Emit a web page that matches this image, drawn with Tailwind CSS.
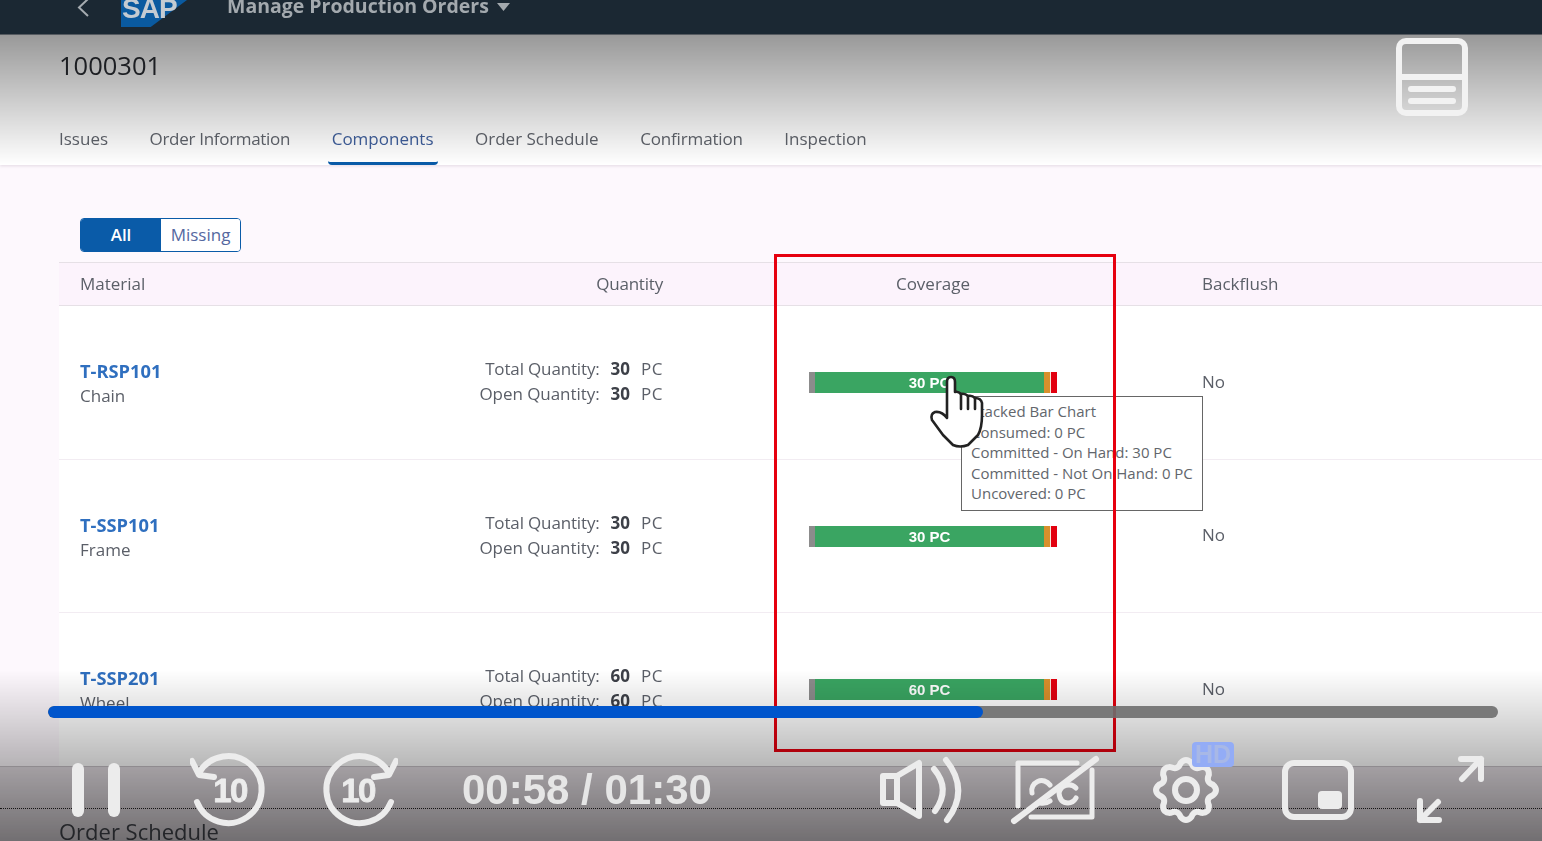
<!DOCTYPE html>
<html lang="en">
<head>
<meta charset="utf-8">
<title>Manage Production Orders</title>
<script src="https://cdn.jsdelivr.net/npm/@tailwindcss/browser@4"></script>
</head>
<body class="m-0">
<div class="relative w-[1542px] h-[841px] overflow-hidden bg-[#fdf8fd] font-['Open_Sans',sans-serif] text-[#5b5f68]">
<div class="blur-[0.5px]">

  <!-- Shell bar -->
  <header class="flex h-[35px] overflow-hidden bg-[#1b2833] border-b border-[#555b60] relative">
    <svg class="absolute left-[74px] top-0" width="18" height="18" viewBox="0 0 18 18" fill="none" stroke="#a5abb0" stroke-width="2"><path d="M14 -1 L5 7.5 L14 16"/></svg>
    <div class="absolute left-[121px] top-0 w-[66px] h-[27px] bg-[#0a5aa0] [clip-path:polygon(0_0,100%_0,45%_100%,0_100%)]"></div>
    <span class="absolute left-[122px] top-[-11px] text-[28px] leading-[40px] font-bold tracking-[-1px] text-[#c4cbd2] font-['Liberation_Sans',sans-serif]">SAP</span>
    <span class="absolute left-[227px] top-[-7px] text-[19.5px] leading-[26px] font-bold text-[#a3a9ae]">Manage Production Orders</span>
    <div class="absolute left-[497px] top-[3px] w-[13px] h-[8px] bg-[#a3a9ae] [clip-path:polygon(0_0,100%_0,50%_100%)]"></div>
  </header>

  <!-- Object header with tabs -->
  <section class="relative h-[130px] bg-white px-[59px] shadow-[0_1px_3px_rgba(120,100,120,0.2)] flex flex-col">
    <h1 class="mt-[13px] text-[25.5px] leading-[34px] font-normal text-[#2a2d33]">1000301</h1>
    <nav class="mt-auto flex gap-[33.5px] -ml-1 text-[17px] text-[#60646c]">
      <span class="px-1 h-[44px] leading-[36px]">Issues</span>
      <span class="px-1 h-[44px] leading-[36px] tracking-[-0.3px]">Order Information</span>
      <span class="px-1 h-[44px] leading-[36px] text-[#3f5f9c] border-b-[3px] border-[#0a5ba8] rounded-b-sm">Components</span>
      <span class="px-1 h-[44px] leading-[36px]">Order Schedule</span>
      <span class="px-1 h-[44px] leading-[36px] tracking-[-0.15px]">Confirmation</span>
      <span class="px-1 h-[44px] leading-[36px]">Inspection</span>
    </nav>
  </section>

  <!-- Filter -->
  <div class="pt-[53px] pb-[10px] pl-[80px]">
    <div class="flex w-[161px] h-[34px] rounded border border-[#0a5ba8] text-[17px] leading-[32px] overflow-hidden">
      <span class="w-[80px] bg-[#0a5ba8] text-white text-center font-semibold">All</span>
      <span class="flex-1 bg-white text-center text-[#55689f]">Missing</span>
    </div>
  </div>

  <!-- Table -->
  <div class="ml-[59px] h-[504px]">
    <div class="flex items-center h-[44px] pl-[21px] bg-[#fcf3fc] border-y border-[#e6e0e6] text-[17px]">
      <div class="w-[583px] flex"><span>Material</span><span class="ml-auto tracking-[-0.2px]">Quantity</span></div>
      <div class="ml-[146px] w-[248px] text-center">Coverage</div>
      <div class="ml-[145px]">Backflush</div>
    </div>

    <div class="flex items-center h-[154px] pl-[21px] bg-white border-b border-[#f2ecf2] text-[17px]">
      <div class="w-[583px] flex items-center">
        <div class="leading-[25px] pt-[1px]"><div class="font-bold text-[18.3px] text-[#2f6fbf]">T-RSP101</div><div>Chain</div></div>
        <div class="ml-auto -mt-[3px] grid grid-cols-[auto_auto_auto] gap-x-[11px] leading-[25px] text-right"><span class="tracking-[-0.15px]">Total Quantity:</span><b class="font-bold text-[#3d4048]">30</b><span class="tracking-[0.5px]">PC</span><span class="tracking-[-0.05px]">Open Quantity:</span><b class="font-bold text-[#3d4048]">30</b><span class="tracking-[0.5px]">PC</span></div>
      </div>
      <div class="ml-[146px] w-[248px] h-[21px] flex text-white font-['Liberation_Sans',sans-serif] font-bold text-[15px] leading-[21px]">
        <div class="w-[6px] bg-[#8c8c8c]"></div><div class="w-[229px] bg-[#3aa562] text-center">30 PC</div><div class="w-[6px] bg-[#d9902c]"></div><div class="w-px bg-[#f5e6d8]"></div><div class="w-[6px] bg-[#e2000f]"></div>
      </div>
      <div class="ml-[145px] -translate-y-px">No</div>
    </div>

    <div class="flex items-center h-[153px] pl-[21px] bg-white border-b border-[#f2ecf2] text-[17px]">
      <div class="w-[583px] flex items-center">
        <div class="leading-[25px] pt-[1px]"><div class="font-bold text-[18.3px] text-[#2f6fbf]">T-SSP101</div><div>Frame</div></div>
        <div class="ml-auto -mt-[3px] grid grid-cols-[auto_auto_auto] gap-x-[11px] leading-[25px] text-right"><span class="tracking-[-0.15px]">Total Quantity:</span><b class="font-bold text-[#3d4048]">30</b><span class="tracking-[0.5px]">PC</span><span class="tracking-[-0.05px]">Open Quantity:</span><b class="font-bold text-[#3d4048]">30</b><span class="tracking-[0.5px]">PC</span></div>
      </div>
      <div class="ml-[146px] w-[248px] h-[21px] flex text-white font-['Liberation_Sans',sans-serif] font-bold text-[15px] leading-[21px]">
        <div class="w-[6px] bg-[#8c8c8c]"></div><div class="w-[229px] bg-[#3aa562] text-center">30 PC</div><div class="w-[6px] bg-[#d9902c]"></div><div class="w-px bg-[#f5e6d8]"></div><div class="w-[6px] bg-[#e2000f]"></div>
      </div>
      <div class="ml-[145px] -translate-y-px">No</div>
    </div>

    <div class="flex items-center h-[153px] pl-[21px] bg-white text-[17px]">
      <div class="w-[583px] flex items-center">
        <div class="leading-[25px] pt-[1px]"><div class="font-bold text-[18.3px] text-[#2f6fbf]">T-SSP201</div><div>Wheel</div></div>
        <div class="ml-auto -mt-[3px] grid grid-cols-[auto_auto_auto] gap-x-[11px] leading-[25px] text-right"><span class="tracking-[-0.15px]">Total Quantity:</span><b class="font-bold text-[#3d4048]">60</b><span class="tracking-[0.5px]">PC</span><span class="tracking-[-0.05px]">Open Quantity:</span><b class="font-bold text-[#3d4048]">60</b><span class="tracking-[0.5px]">PC</span></div>
      </div>
      <div class="ml-[146px] w-[248px] h-[21px] flex text-white font-['Liberation_Sans',sans-serif] font-bold text-[15px] leading-[21px]">
        <div class="w-[6px] bg-[#8c8c8c]"></div><div class="w-[229px] bg-[#3aa562] text-center">60 PC</div><div class="w-[6px] bg-[#d9902c]"></div><div class="w-px bg-[#f5e6d8]"></div><div class="w-[6px] bg-[#e2000f]"></div>
      </div>
      <div class="ml-[145px] -translate-y-px">No</div>
    </div>
  </div>

  <!-- Next section -->
  <section class="h-[75px] bg-[#e4dee3] border-t border-[#c8c2c8]">
    <div class="h-[42px] border-b border-dotted border-[#222]"></div>
    <h2 class="ml-[59px] mt-[5px] text-[22px] leading-[34px] font-normal text-[#45484f]">Order Schedule</h2>
  </section>

  <!-- Chart tooltip -->
  <div class="absolute left-[961px] top-[396px] w-[242px] h-[115px] bg-white border border-[#666] pl-[9px] pt-[4px] text-[15px] leading-[20.6px] text-[#62666c] whitespace-nowrap">
    <div>Stacked Bar Chart</div>
    <div>Consumed: 0 PC</div>
    <div>Committed - On Hand: 30 PC</div>
    <div>Committed - Not On Hand: 0 PC</div>
    <div>Uncovered: 0 PC</div>
  </div>

  <!-- Video annotation -->
  <div class="absolute left-[774px] top-[254px] w-[342px] h-[498px] border-[3px] border-[#e6000f]"></div>

  <!-- Hand cursor -->
  <svg class="absolute left-[925px] top-[372px]" width="64" height="80" viewBox="925 372 64 80" fill="#fff" stroke="#222" stroke-width="2.6" stroke-linejoin="round" stroke-linecap="round">
    <path d="M947 382 Q947 377 951 377 Q955 377 955 382 L955 392 Q958 391 961 394 Q965 393 968 396 Q972 395 975 398 Q981 398 982 403 L982 415 Q982 428 978 435 L968 445 Q960 448 953 445 L943 435 L932 420 Q930 414 935 412 Q942 411 947 418 Z"/>
    <path d="M961 394 V409 M968 396 V409 M975 398 V409" fill="none"/>
  </svg>
</div>

  <!-- Player scrims -->
  <div class="absolute inset-x-0 top-[35px] h-[130px] bg-gradient-to-b from-black/40 to-transparent"></div>
  <div class="absolute inset-x-0 top-[670px] bottom-0 bg-gradient-to-b from-transparent to-black/50"></div>

  <!-- Layout toggle -->
  <svg class="absolute left-[1396px] top-[38px]" width="72" height="78" viewBox="0 0 72 78" fill="none" stroke="#f2f2f2" stroke-width="6" stroke-linecap="round">
    <rect x="3" y="3" width="66" height="72" rx="7"/>
    <path d="M3 39 H69" stroke-linecap="butt"/>
    <path d="M15 51 H57 M15 63 H57"/>
  </svg>

  <!-- Progress -->
  <div class="absolute left-[48px] top-[706px] w-[1450px] h-3 rounded-full bg-[#6e6e6e]/90 overflow-hidden">
    <div class="w-[935px] h-full rounded-full bg-[#0055cc]"></div>
  </div>

  <!-- Player controls -->
  <div class="absolute left-0 top-[750px] w-full h-20 flex items-center pl-[72px] text-[#ececec]">
    <div class="flex gap-6 w-12 h-[54px]"><div class="w-3 h-full rounded-full bg-[#ececec]"></div><div class="w-3 h-full rounded-full bg-[#ececec]"></div></div>

    <svg class="ml-[70px] shrink-0" width="76" height="80" viewBox="190 750 76 80" fill="none" stroke="#ececec" stroke-width="6" stroke-linecap="round" stroke-linejoin="round">
      <path d="M199 773 A33.5 33.5 0 1 1 197 802"/>
      <path d="M192 761 L199 775 L214 777"/>
      <text x="230" y="802" text-anchor="middle" fill="#ececec" stroke="#ececec" stroke-width="0.8" font-family="Liberation Sans" font-weight="700" font-size="33" letter-spacing="-1.5">10</text>
    </svg>

    <svg class="ml-[56px] shrink-0" width="76" height="80" viewBox="322 750 76 80" fill="none" stroke="#ececec" stroke-width="6" stroke-linecap="round" stroke-linejoin="round">
      <path d="M389 773 A33.5 33.5 0 1 0 391 802"/>
      <path d="M396 761 L389 775 L374 777"/>
      <text x="358" y="802" text-anchor="middle" fill="#ececec" stroke="#ececec" stroke-width="0.8" font-family="Liberation Sans" font-weight="700" font-size="33" letter-spacing="-1.5">10</text>
    </svg>

    <div class="ml-[64px] w-[249px] shrink-0 whitespace-nowrap font-['Liberation_Sans',sans-serif] font-bold text-[42px] leading-[80px] text-[#e6e6e6]">00:58 / 01:30</div>

    <svg class="ml-[167px] shrink-0" width="86" height="80" viewBox="878 750 86 80" fill="none" stroke="#ececec" stroke-width="6" stroke-linecap="round" stroke-linejoin="round">
      <path d="M883 776 H897 L919 763 V816 L897 803 H883 Z M897 776 V803"/>
      <path d="M934 769 Q951 789 935 811"/>
      <path d="M946 760 Q970 790 947 820"/>
    </svg>

    <svg class="ml-[46px] shrink-0" width="90" height="80" viewBox="1010 750 90 80" fill="none" stroke="#ececec" stroke-width="5" stroke-linecap="round" stroke-linejoin="round">
      <path d="M1018 806 V763 H1077"/>
      <path d="M1092 770 V817 H1031"/>
      <path d="M1014 821 L1096 759" stroke-width="6"/>
      <path d="M1050 785 A10 10 0 0 0 1032 793"/>
      <path d="M1040 803 Q1046 804 1050 801"/>
      <path d="M1076 788 A10 10 0 0 0 1059 793 Q1060 803 1068 803 Q1073 803 1076 798"/>
    </svg>

    <div class="relative ml-[50px] w-[72px] h-20 shrink-0">
      <svg class="absolute inset-0" width="72" height="80" viewBox="-36 -40 72 80" fill="none" stroke="#ececec" stroke-width="6" stroke-linejoin="round">
        <path d="M26.97 -5.36 Q33 0 26.97 5.36 Q19.4 8.04 22.87 15.28 Q23.33 23.33 15.28 22.87 Q8.04 19.4 5.36 26.97 Q0 33 -5.36 26.97 Q-8.04 19.4 -15.28 22.87 Q-23.33 23.33 -22.87 15.28 Q-19.4 8.04 -26.97 5.36 Q-33 0 -26.97 -5.36 Q-19.4 -8.04 -22.87 -15.28 Q-23.33 -23.33 -15.28 -22.87 Q-8.04 -19.4 -5.36 -26.97 Q0 -33 5.36 -26.97 Q8.04 -19.4 15.28 -22.87 Q23.33 -23.33 22.87 -15.28 Q19.4 -8.04 26.97 -5.36 Z"/>
        <circle cx="0" cy="0" r="11"/>
      </svg>
      <span class="absolute left-[42px] top-[-8px] w-[42px] h-[25px] rounded-sm bg-[#93acf6] text-center font-['Liberation_Sans',sans-serif] font-bold text-[25px] leading-[25px] text-[#a8b8e6]">HD</span>
    </div>

    <div class="relative ml-[60px] w-[72px] h-[60px] shrink-0 rounded-xl border-[6px] border-[#ececec]">
      <div class="absolute right-[6px] bottom-[5px] w-6 h-[18px] rounded-sm bg-[#ececec]"></div>
    </div>

    <svg class="ml-[60px] shrink-0" width="72" height="80" viewBox="1414 750 72 80" fill="none" stroke="#ececec" stroke-width="6" stroke-linecap="round" stroke-linejoin="round">
      <path d="M1461 759 H1481 V779 M1481 759 L1462 779"/>
      <path d="M1420 801 V820 H1439 M1420 820 L1438 802"/>
    </svg>
  </div>
</div>
</body>
</html>
